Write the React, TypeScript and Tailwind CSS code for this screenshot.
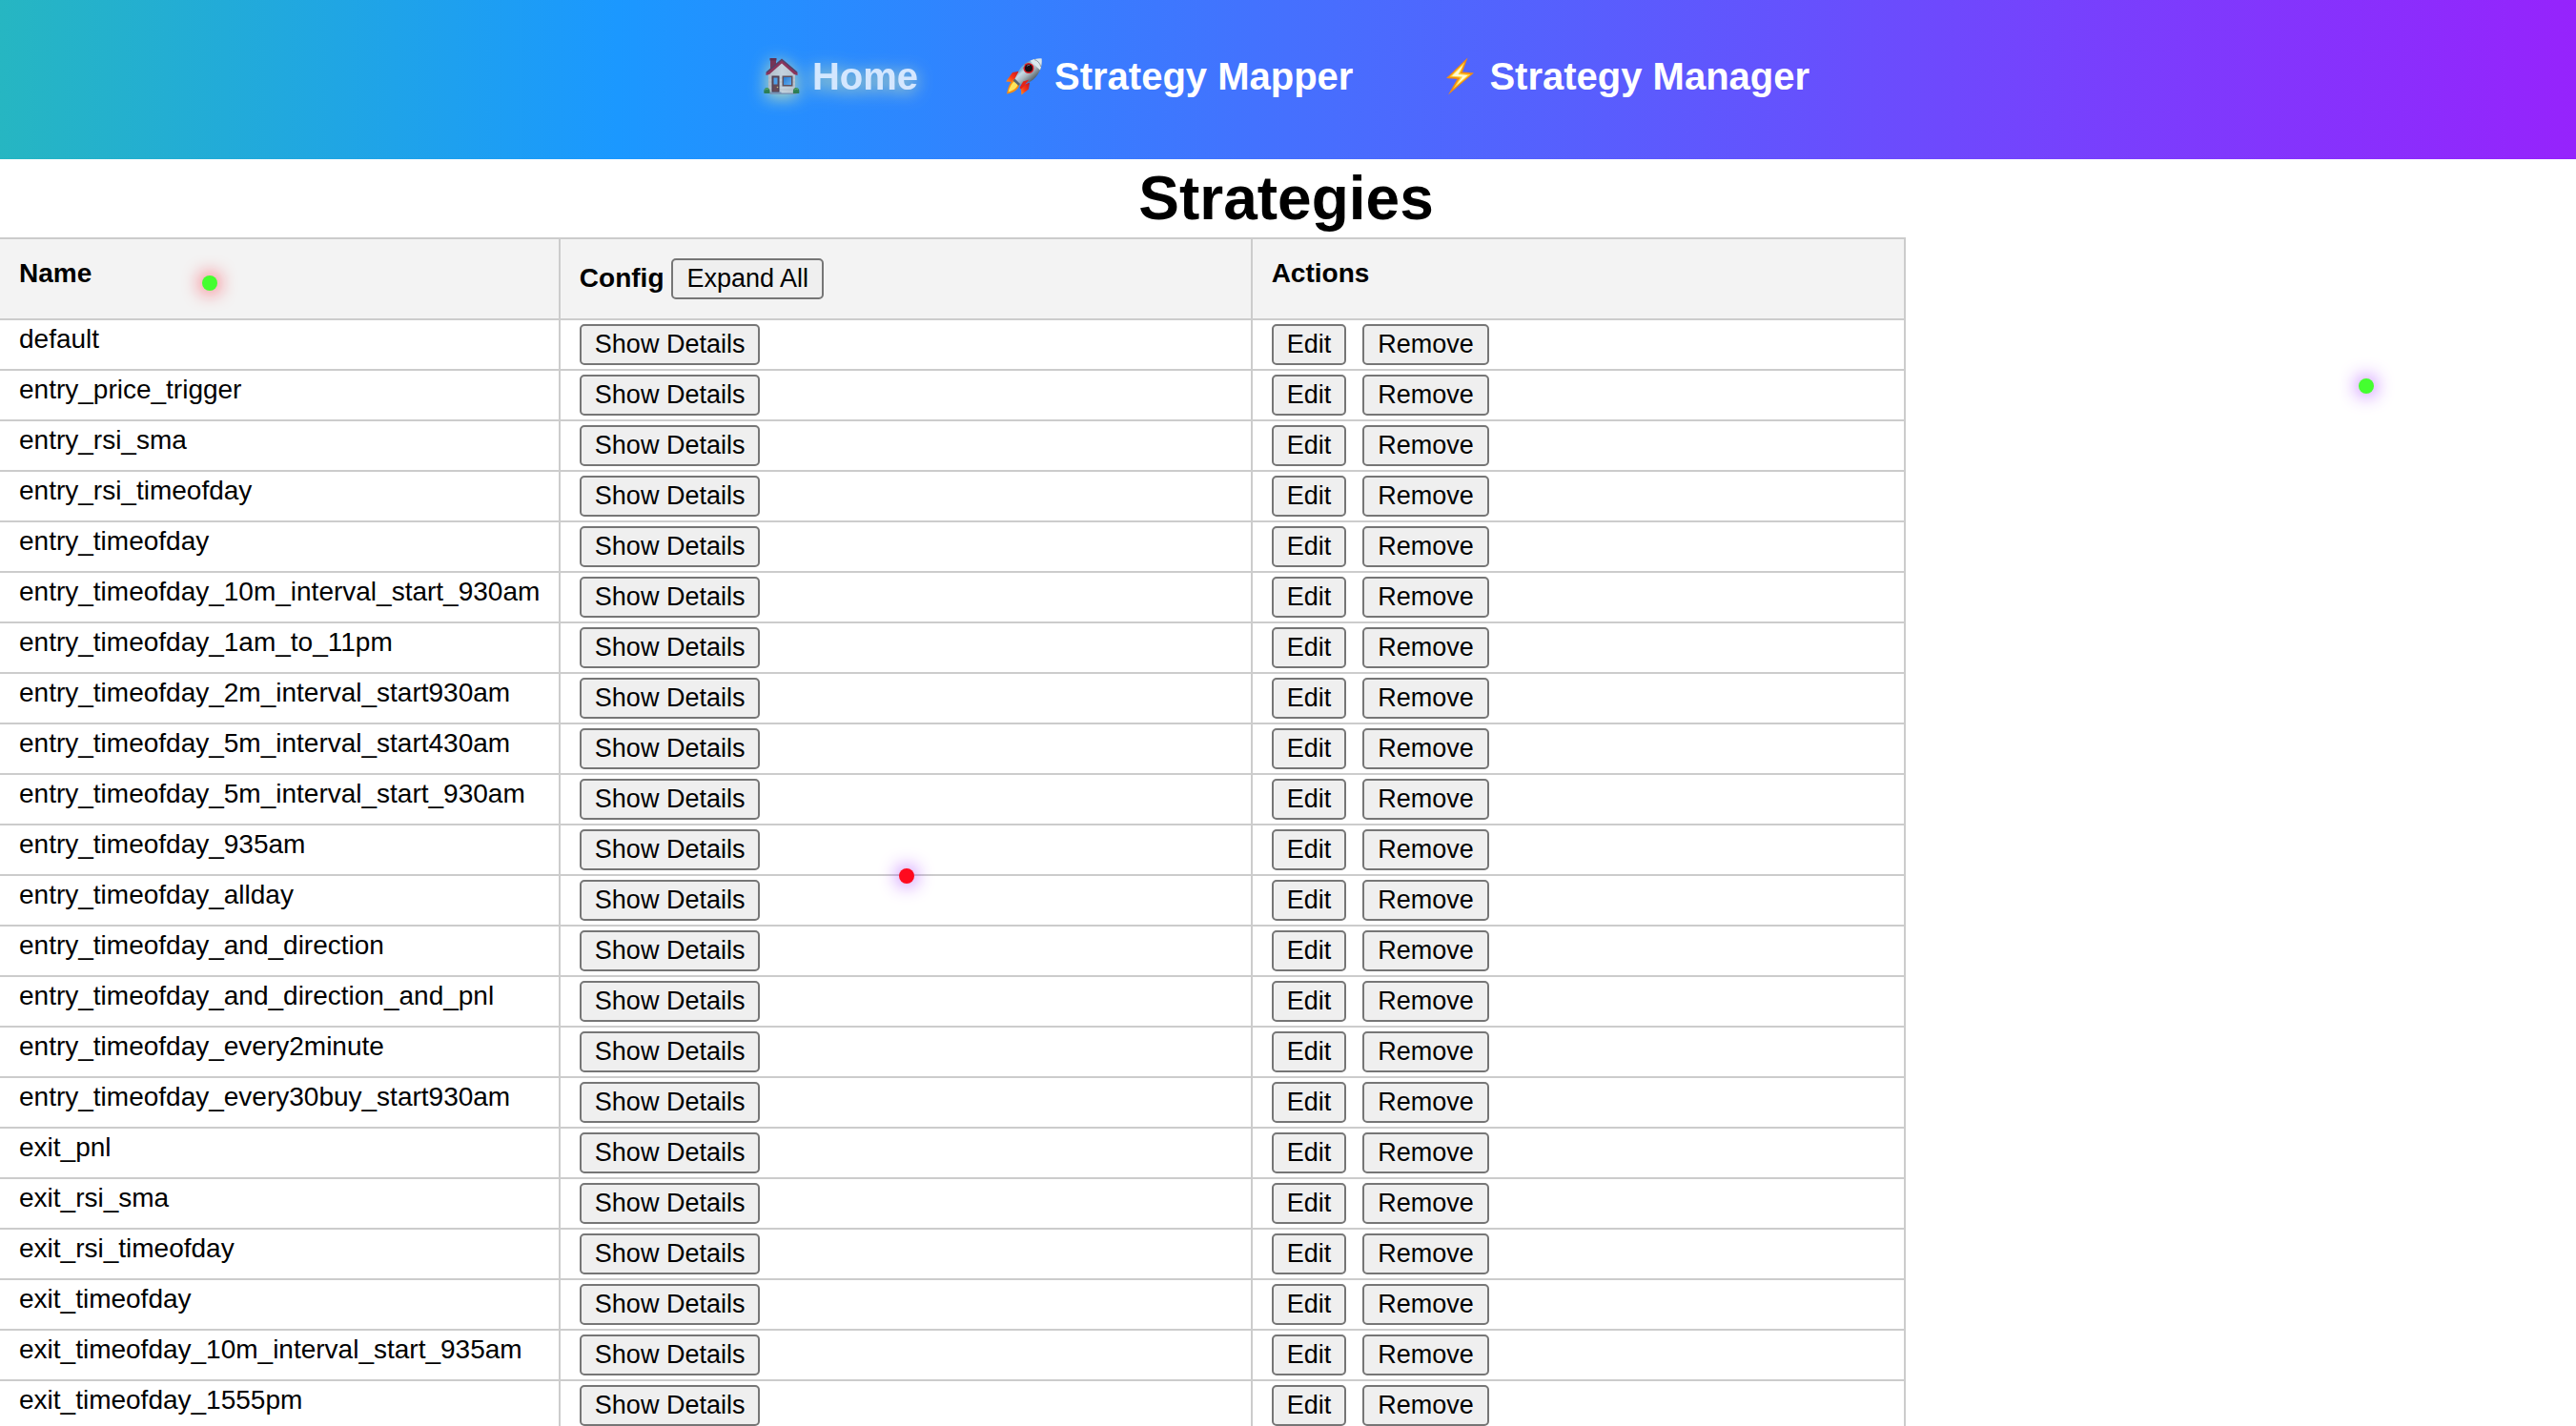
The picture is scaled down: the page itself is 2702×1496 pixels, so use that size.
import type { ReactNode } from "react";

const strategies = [
  "default",
  "entry_price_trigger",
  "entry_rsi_sma",
  "entry_rsi_timeofday",
  "entry_timeofday",
  "entry_timeofday_10m_interval_start_930am",
  "entry_timeofday_1am_to_11pm",
  "entry_timeofday_2m_interval_start930am",
  "entry_timeofday_5m_interval_start430am",
  "entry_timeofday_5m_interval_start_930am",
  "entry_timeofday_935am",
  "entry_timeofday_allday",
  "entry_timeofday_and_direction",
  "entry_timeofday_and_direction_and_pnl",
  "entry_timeofday_every2minute",
  "entry_timeofday_every30buy_start930am",
  "exit_pnl",
  "exit_rsi_sma",
  "exit_rsi_timeofday",
  "exit_timeofday",
  "exit_timeofday_10m_interval_start_935am",
  "exit_timeofday_1555pm",
];

function HouseIcon() {
  return (
    <svg viewBox="0 0 40 40" className="size-10 shrink-0" aria-hidden="true">
      <defs>
        <linearGradient id="wall" x1="0" y1="0" x2="1" y2="0">
          <stop offset="0" stopColor="#d3c8ba" />
          <stop offset="0.5" stopColor="#ece4d6" />
          <stop offset="1" stopColor="#dcd2c4" />
        </linearGradient>
        <linearGradient id="pane" x1="0" y1="0" x2="1" y2="1">
          <stop offset="0" stopColor="#2b78c4" />
          <stop offset="1" stopColor="#6fb4ee" />
        </linearGradient>
      </defs>
      <path d="M8 2h6v10l-6 5z" fill="#8b1f2e" />
      <path d="M7.500 1h7v2.500h-7z" fill="#6e1825" />
      <path d="M6 17 20 5l14 12v21H6z" fill="url(#wall)" />
      <path d="M6 22h28M6 26h28M6 30h28M6 34h28" stroke="#c4b8aa" strokeWidth="0.500" />
      <path d="M20 2 36.500 16v3L33 18 20 6.500 7 18l-3.500 1v-3z" fill="#a51e32" />
      <path d="M20 1.500 36.500 15.500l-1 1L20 3.500l-15.500 13-1-1z" fill="#5d3145" />
      <path d="M9.500 19.500h8V37h-8z" fill="#4b2222" />
      <path d="M10.500 20.500h6V36h-6z" fill="#74382f" />
      <path d="M11.500 21.500h4v7h-4z" fill="#58a4e2" />
      <circle cx="15.500" cy="31.500" r="0.800" fill="#f0c860" />
      <path d="M20.500 19.500h11v11h-11z" fill="#6b4238" />
      <path d="M22 21h8v8h-8z" fill="url(#pane)" />
      <path d="M7.500 36.500h12V39h-12zM19.500 37.500h16V39h-16z" fill="#8c98a6" />
      <path d="M1.500 38c-.8-4 1-6 3-6s3.500 2 3 6zM32 38c-.5-4 .8-6 3-6s4 2 3.200 6z" fill="#2f7a2c" />
      <path d="M2.500 34.500c.8-1.800 2.800-2 3.600-.4M33.500 34.500c.8-1.800 2.800-2 3.600-.4" stroke="#5fae45" strokeWidth="1.300" fill="none" />
    </svg>
  );
}

function RocketIcon() {
  return (
    <svg viewBox="0 0 40 40" className="size-10 shrink-0" aria-hidden="true">
      <defs>
        <linearGradient id="hull" x1="14" y1="10" x2="28" y2="26" gradientUnits="userSpaceOnUse">
          <stop offset="0" stopColor="#3f6f96" />
          <stop offset="0.350" stopColor="#c5dbe6" />
          <stop offset="0.600" stopColor="#a8b6be" />
          <stop offset="1" stopColor="#4c5861" />
        </linearGradient>
        <linearGradient id="fin" x1="0" y1="1" x2="1" y2="0">
          <stop offset="0" stopColor="#ff9a1c" />
          <stop offset="0.450" stopColor="#f5361a" />
          <stop offset="1" stopColor="#c3121c" />
        </linearGradient>
      </defs>
      <path d="M16.500 14.500 8 16 1.200 25.500l8.800.8z" fill="url(#fin)" />
      <path d="M26 26.500 25 33.500l-7.500 6-1-9z" fill="url(#fin)" />
      <path d="M10 23c-4 2-6.500 7.500-8 15.500C8 37.500 13.500 35 15.500 29z" fill="#f58b14" />
      <path d="M10.500 25c-3.200 2-5.500 6-7 11.500C8.500 35 12 33 13.500 29z" fill="#ffe45a" />
      <path d="M38.500 1.500C29 1 20 5 15.500 13L9.500 24.500l5 5L27 25.500C35.500 20 39.500 11 38.500 1.500z" fill="url(#hull)" />
      <path d="M38.500 1.500c-4.500-.3-8.500.4-12 2.200L37 13.500c1.500-4 1.800-8 1.500-12z" fill="#dbe7ed" />
      <path d="M31 2.500c3 .8 5.800 3.500 6.800 7.500" stroke="#8d9ba3" strokeWidth="1" fill="none" />
      <path d="M10.500 22.500 16 28l-1.500 2-6-5.500z" fill="#59646c" />
      <path d="m25.500 23.500-6.300 2L15.500 32l1.500 1.500 4-4.500z" fill="#e52318" />
      <circle cx="25" cy="11.500" r="5.500" fill="#d91a22" />
      <circle cx="25" cy="11.500" r="4" fill="#170d12" />
      <path d="M23 9.500c1-1 2-1.200 3-1" stroke="#7d7d86" strokeWidth="1" fill="none" />
      <path d="M15 15.500c2-4 3.800-5.800 5.500-7" stroke="#6ab4e0" strokeWidth="1.500" fill="none" />
    </svg>
  );
}

function BoltIcon() {
  return (
    <svg viewBox="0 0 40 40" className="size-10 shrink-0" aria-hidden="true">
      <path d="M29.500.5 7 22l11.500 1L9 39.500 36 16.500l-12-1z" fill="#f08c12" />
      <path d="M26.500 5 10.500 20.500l11 1L14 33.500 32.500 18l-11-1z" fill="#ffd43c" />
      <path d="M24.500 8.500 13 19.700l11 .8L18 29l11.500-10-10-1z" fill="#fffbd6" />
    </svg>
  );
}

function NavLink({ icon, label, active = false }: { icon: ReactNode; label: string; active?: boolean }) {
  return (
    <a
      href="#"
      className={
        active
          ? "flex items-center gap-3 opacity-80 drop-shadow-[0_3px_9px_rgba(255,255,150,0.9)]"
          : "flex items-center gap-3"
      }
    >
      {icon}
      {label}
    </a>
  );
}

function Button({ children }: { children: ReactNode }) {
  return (
    <button
      type="button"
      className="h-[43px] rounded-[5px] border-2 border-[#767676] bg-[#efefef] px-[14px] pb-[2px] text-[27px] leading-[30px] font-normal whitespace-nowrap text-black"
    >
      {children}
    </button>
  );
}

export default function App() {
  return (
    <div className="relative min-h-screen overflow-x-hidden bg-white font-['Liberation_Sans',Arial,sans-serif] text-[28px] leading-8 text-black">
      <header className="bg-[linear-gradient(90deg,#26b6c2_0%,#1b98ff_24%,#9623fc_100%)] pt-14 pr-1 pb-[63px]">
        <nav className="flex justify-center gap-[91px] text-[40px] leading-[48px] font-bold text-white">
          <NavLink icon={<HouseIcon />} label="Home" active />
          <NavLink icon={<RocketIcon />} label="Strategy Mapper" />
          <NavLink icon={<BoltIcon />} label="Strategy Manager" />
        </nav>
      </header>

      <main>
        <h1 className="pr-1 text-center text-[64px] leading-[82px] font-bold">Strategies</h1>
        <table className="w-[74%] table-fixed border-separate border-spacing-0 border-t-2 border-[#cccccc] text-left">
          <colgroup>
            <col className="w-[29.4%]" />
            <col className="w-[36.3%]" />
            <col />
          </colgroup>
          <thead className="bg-[#f3f3f3]">
            <tr>
              <th scope="col" className="border-r-2 border-b-2 border-[#cccccc] p-5 align-top">Name</th>
              <th scope="col" className="border-r-2 border-b-2 border-[#cccccc] p-5 align-top">
                <div className="flex items-baseline gap-2">
                  Config
                  <Button>Expand All</Button>
                </div>
              </th>
              <th scope="col" className="border-r-2 border-b-2 border-[#cccccc] p-5 align-top">Actions</th>
            </tr>
          </thead>
          <tbody>
            {strategies.map((name) => (
              <tr key={name}>
                <td className="border-r-2 border-b-2 border-[#cccccc] py-1 pl-5 align-top whitespace-nowrap">{name}</td>
                <td className="border-r-2 border-b-2 border-[#cccccc] px-5 py-1 align-top">
                  <div className="flex">
                    <Button>Show Details</Button>
                  </div>
                </td>
                <td className="border-r-2 border-b-2 border-[#cccccc] px-5 py-1 align-top">
                  <div className="flex gap-[17px]">
                    <Button>Edit</Button>
                    <Button>Remove</Button>
                  </div>
                </td>
              </tr>
            ))}
          </tbody>
        </table>
      </main>

      <span className="pointer-events-none absolute top-[289px] left-[212px] size-4 rounded-full bg-[#44ff2f] shadow-[0_0_20px_#ff0a1e]" />
      <span className="pointer-events-none absolute top-[397px] left-[2474px] size-4 rounded-full bg-[#44ff2f] shadow-[0_0_20px_#9821fb]" />
      <span className="pointer-events-none absolute top-[911px] left-[943px] size-4 rounded-full bg-[#ff0a1e] shadow-[0_0_20px_#9821fb]" />
    </div>
  );
}
